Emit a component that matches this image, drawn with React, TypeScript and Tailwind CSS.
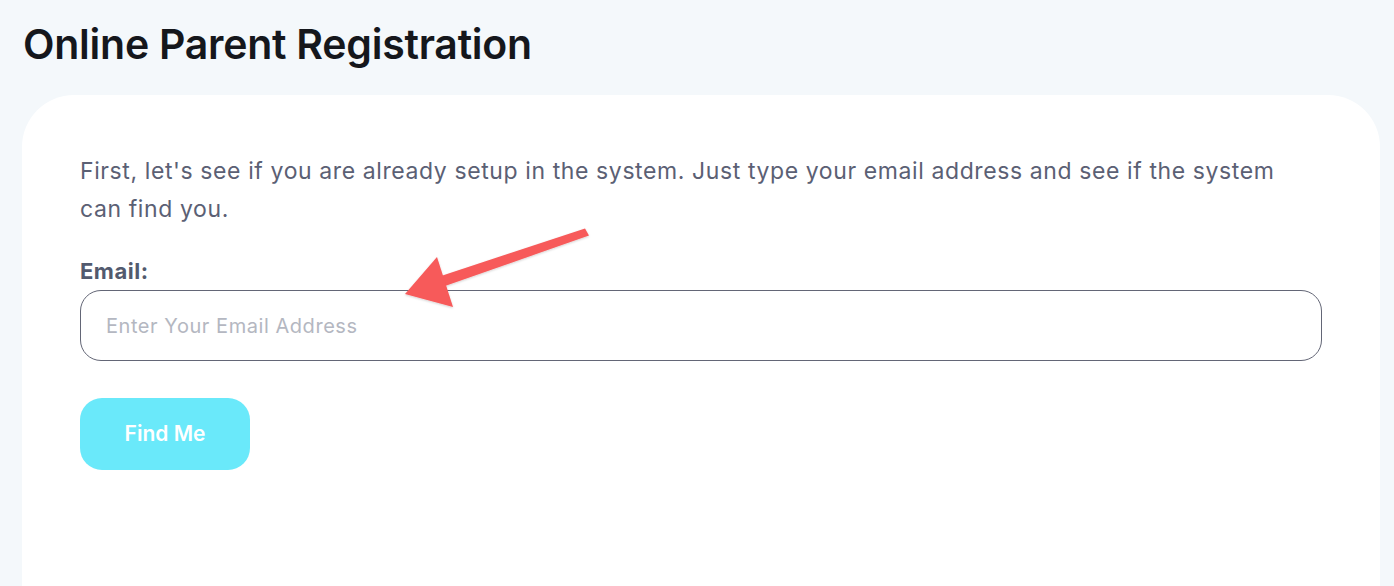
import { useState } from 'react'

function Arrow() {
  // red annotation arrow pointing at the email field
  return (
    <svg
      className="pointer-events-none absolute left-0 top-0"
      width="1394"
      height="586"
      viewBox="0 0 1394 586"
    >
      <defs>
        <filter id="shadow" x="-20%" y="-20%" width="140%" height="140%">
          <feDropShadow dx="0" dy="1" stdDeviation="1.2" floodColor="#000" floodOpacity="0.18" />
        </filter>
      </defs>
      <g filter="url(#shadow)" fill="#f75a5a">
        <polygon points="585,228.5 589,235.5 445,286 441,276" />
        <polygon points="405,294 437,257 453,307" />
      </g>
    </svg>
  )
}

export default function App() {
  const [email, setEmail] = useState('')

  return (
    <main
      className="relative min-h-[586px] overflow-hidden bg-[#f4f8fb] px-[22px] pt-[20px]"
      style={{ fontFamily: 'Inter, "Noto Sans", sans-serif' }}
    >
      <h1 className="ml-[1px] text-[41px] font-semibold leading-[48px] tracking-[-0.25px] text-[#15171c]">
        Online Parent Registration
      </h1>
      <div className="mt-[27px] min-h-[520px] w-[1358px] rounded-t-[52px] bg-white px-[58px] pt-[57px]">
        <p className="text-[23px] leading-[38px] tracking-[0.6px] text-[#5b6074]">
          First, let's see if you are already setup in the system. Just type your email address and see if the system
          <br />
          can find you.
        </p>
        <label
          htmlFor="email"
          className="mt-[29px] block text-[22px] font-bold leading-[28px] tracking-[0.5px] text-[#525a6e]"
        >
          Email:
        </label>
        <input
          id="email"
          type="email"
          value={email}
          onChange={(e) => setEmail(e.target.value)}
          placeholder="Enter Your Email Address"
          className="mt-[5px] block h-[71px] w-full rounded-[21px] border-[1.75px] border-[#636676] bg-white px-[25px] text-[20px] tracking-[0.55px] text-[#333] outline-none placeholder:text-[#b4b7c1]"
        />
        <button
          type="button"
          className="mt-[37px] h-[72px] w-[170px] rounded-[22px] bg-[#6ae9fa] text-[21px] font-semibold text-white"
        >
          Find Me
        </button>
      </div>
      <Arrow />
    </main>
  )
}
